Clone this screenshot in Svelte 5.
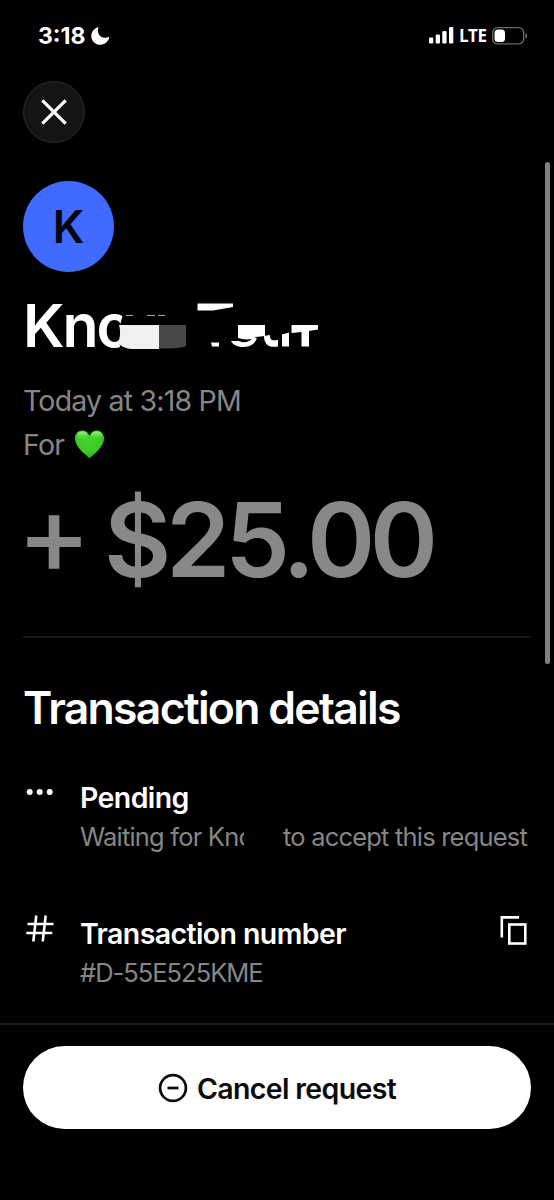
<script lang="ts">
	interface Transaction {
		initial: string;
		name: string;
		date: string;
		amount: string;
		number: string;
	}

	const transaction: Transaction = {
		initial: 'K',
		name: 'Kno',
		date: 'Today at 3:18 PM',
		amount: '$25.00',
		number: '#D-55E525KME'
	};
</script>

<div class="screen">
	<header class="status-bar">
		<div class="status-left">
			<span class="time">3:18</span>
			<svg class="moon" width="19" height="18" viewBox="0 0 19 18">
				<path d="M7.500 0C5.500 5.500 8.500 10.800 14 10.800c1.600 0 3-.3 4.400-1C17.500 14.500 14 17.700 9.500 17.700 4.300 17.700.3 13.900.3 8.900.3 4.800 3.500 1.200 7.500 0z" fill="#fff" />
			</svg>
		</div>
		<div class="status-right">
			<svg width="25" height="17" viewBox="0 0 25 17" fill="#fff">
				<rect x="0" y="10.500" width="4.300" height="6" rx="1.200" />
				<rect x="6.700" y="7.500" width="4.300" height="9" rx="1.200" />
				<rect x="13.300" y="4" width="4.300" height="12.500" rx="1.200" />
				<rect x="20" y="0" width="4.300" height="16.500" rx="1.200" />
			</svg>
			<span class="network">LTE</span>
			<svg class="battery" width="36" height="18" viewBox="0 0 36 18">
				<rect x=".7" y=".7" width="31" height="16.200" rx="5" fill="none" stroke="#6b6b6b" stroke-width="1.300" />
				<rect x="2.500" y="2.600" width="10.500" height="12.400" rx="3.500" fill="#fff" />
				<path d="M33.500 6v5.600c2.300-.9 2.300-4.700 0-5.600z" fill="#777" />
			</svg>
		</div>
	</header>

	<main class="content">
		<button class="close-button" aria-label="Close">
			<svg width="26" height="26" viewBox="0 0 26 26" stroke="#fff" stroke-width="3.200">
				<path d="M1.300 1.300l23.400 23.400M24.700 1.300L1.300 24.700" />
			</svg>
		</button>

		<div class="avatar">{transaction.initial}</div>

		<h1 class="name">
			<span>{transaction.name}</span>
			<!-- hidden remainder of the name -->
			<svg class="redaction" width="214" height="60" viewBox="106 295 214 60" aria-hidden="true">
				<path d="M123 295h40v60h-43v-6l-1-20 4-15z" fill="#000" />
				<path d="M126 315.400h7M147 315.400h8M158 315.400h7" stroke="#aaa" stroke-width="1" />
				<path d="M119 325h40v24h-25c-7 0-12-2-16-6 2-5 3-11 1-18z" fill="#f1f1f1" />
				<path d="M159 325h27v21c-4 2-13 2.500-27 2.500z" fill="#484848" />
				<path d="M197.500 303.500H233v3.500l-20 3.500h-15.500z" fill="#fff" />
				<path d="M211 342.500h8v4h-7z" fill="#fff" />
				<path d="M238 325h27v11l-9 1c-3 3-12 3-18 1zM231 341h8c4 2 9 2 14-3h4c-2 6-7 9-13 9-6 0-11-2-13-6z" fill="#fff" />
				<path d="M264 336l6-1c0 5 2 6 8 5v6.500c-9 1.500-14-2-14-10.500zM282 334.500l7-2v14h-7zM291.500 325h26.500v4.500l-9 1.500v15.500h-7.500V332l-10 1z" fill="#fff" />
			</svg>
		</h1>

		<div class="meta">
			<p class="date">{transaction.date}</p>
			<p class="note">
				<span>For</span>
				<svg width="31" height="31" viewBox="0 0 32 31">
					<defs>
						<radialGradient id="heart" cx=".45" cy=".3" r=".75">
							<stop offset="0" stop-color="#48d52f" />
							<stop offset=".65" stop-color="#3ac824" />
							<stop offset="1" stop-color="#22a514" />
						</radialGradient>
						<linearGradient id="shine" x1="0" y1="0" x2="0" y2="1">
							<stop offset="0" stop-color="#b4f99c" stop-opacity=".85" />
							<stop offset="1" stop-color="#6be650" stop-opacity="0" />
						</linearGradient>
					</defs>
					<path d="M16 30C12 25.500 1 18.500 1 9.300 1 4.500 4.200 1 8.500 1c3.500 0 6 2 7.500 5.200C17.500 3 20 1 23.500 1 27.800 1 31 4.500 31 9.300 31 18.500 20 25.500 16 30z" fill="url(#heart)" />
					<ellipse cx="8.500" cy="6" rx="5.500" ry="4" fill="url(#shine)" />
					<ellipse cx="23.500" cy="6" rx="5.500" ry="4" fill="url(#shine)" />
				</svg>
			</p>
		</div>

		<div class="amount">
			<span class="sign">+</span>
			<span class="value">{transaction.amount}</span>
		</div>

		<h2 class="section-title">Transaction details</h2>

		<div class="detail">
			<svg class="detail-icon" width="34" height="40" viewBox="0 0 34 40" fill="#fff">
				<circle cx="6.700" cy="14" r="3" />
				<circle cx="16.700" cy="14" r="3" />
				<circle cx="26.700" cy="14" r="3" />
			</svg>
			<div class="detail-body">
				<h3 class="detail-title">Pending</h3>
				<p class="detail-text waiting"><span class="who">Waiting for Kno</span><span>to accept this request</span></p>
			</div>
		</div>

		<div class="detail">
			<svg class="detail-icon" width="34" height="40" viewBox="0 0 34 40" fill="none" stroke="#fff" stroke-width="2.600">
				<path d="M13.300 1.500l-3 26M22.700 1.500l-3 26M4.500 10h26M3.300 19h26" />
			</svg>
			<div class="detail-body">
				<h3 class="detail-title">Transaction number</h3>
				<p class="detail-text code">{transaction.number}</p>
			</div>
			<button class="copy-button" aria-label="Copy transaction number">
				<svg width="27" height="29" viewBox="0 0 27 29" fill="none" stroke="#fff" stroke-width="2.600">
					<path d="M1.800 21.500V1.400H19" />
					<rect x="9.300" y="8.500" width="16" height="19" />
				</svg>
			</button>
		</div>
	</main>

	<footer class="footer">
		<button class="cancel-button">
			<svg width="30" height="30" viewBox="0 0 30 30" fill="none" stroke="#0b0b0b" stroke-width="2.700">
				<circle cx="15" cy="15" r="12.900" />
				<path d="M9.500 15h11" />
			</svg>
			<span>Cancel request</span>
		</button>
	</footer>

	<div class="scrollbar"></div>
</div>

<style>
	:global(body) {
		background: #000;
	}

	.screen {
		position: relative;
		box-sizing: border-box;
		width: 554px;
		height: 1200px;
		overflow: hidden;
		display: flex;
		flex-direction: column;
		background: #000;
		color: #fff;
		font-family: Inter, "Liberation Sans", sans-serif;
	}

	h1,
	h2,
	h3,
	p {
		margin: 0;
		font-weight: 500;
		white-space: nowrap;
	}

	button {
		border: none;
		padding: 0;
		background: none;
		font-family: inherit;
		cursor: pointer;
	}

	svg {
		display: block;
		flex: none;
	}

	.status-bar {
		display: flex;
		flex: none;
		justify-content: space-between;
		align-items: center;
		height: 71px;
		padding: 0 26px 0 38px;
	}

	.status-left,
	.status-right {
		display: flex;
		align-items: center;
	}

	.time {
		width: 53px;
		font-size: 23px;
		font-weight: 700;
	}

	.network {
		width: 32px;
		margin-left: 5px;
		padding-right: 1px;
		font-family: "Open Sans", sans-serif;
		font-size: 17px;
		font-weight: 700;
		letter-spacing: -0.5px;
	}

	.content {
		display: flex;
		flex: none;
		flex-direction: column;
		height: 952px;
		padding: 10px 23px 0;
		box-sizing: border-box;
	}

	.content > * {
		flex: none;
	}

	.close-button {
		display: flex;
		align-items: center;
		justify-content: center;
		box-sizing: border-box;
		width: 62px;
		height: 62px;
		border: 1.5px solid #2b2b2b;
		border-radius: 50%;
		background: #141414;
	}

	.avatar {
		display: flex;
		align-items: center;
		justify-content: center;
		width: 91px;
		height: 91px;
		margin-top: 38px;
		border-radius: 50%;
		background: #416aff;
		color: #04060f;
		font-size: 45px;
		font-weight: 600;
	}

	.name {
		display: flex;
		align-items: center;
		height: 70px;
		margin-top: 18px;
		font-size: 59px;
		font-weight: 600;
		letter-spacing: -2px;
	}

	.name span {
		width: 83px;
	}

	.redaction {
		z-index: 1;
	}

	.meta {
		margin-top: 19px;
		color: #868686;
		font-size: 28.5px;
		letter-spacing: -0.8px;
		line-height: 43.5px;
	}

	.meta p {
		font-weight: 400;
	}

	.note {
		display: flex;
		align-items: center;
		gap: 10px;
	}

	.amount {
		display: flex;
		height: 170px;
		border-bottom: 2px solid #191919;
		color: #888;
		font-size: 103.5px;
		font-weight: 600;
		letter-spacing: -5.4px;
		line-height: 147px;
	}

	.sign {
		width: 87px;
		margin-left: -6px;
		font-size: 111px;
		font-weight: 500;
		line-height: 136px;
	}

	.section-title {
		margin: 40px 0;
		font-size: 44.5px;
		font-weight: 600;
		letter-spacing: -1.7px;
		line-height: 60px;
	}

	.detail {
		display: flex;
		height: 78px;
		margin-bottom: 57.5px;
	}

	.detail-icon {
		margin-right: 23px;
	}

	.detail-body {
		flex: 1;
	}

	.detail-title {
		font-size: 28.5px;
		font-weight: 600;
		letter-spacing: -0.6px;
		line-height: 40px;
	}

	.detail-text {
		color: #868686;
		font-size: 25.5px;
		font-weight: 400;
		letter-spacing: -0.8px;
		line-height: 38px;
	}

	.code {
		letter-spacing: -1px;
	}

	.waiting {
		display: flex;
	}

	.who {
		width: 164px;
		margin-right: 39px;
		overflow: hidden;
	}

	.copy-button {
		align-self: flex-start;
		margin: 2px 4px 0 0;
	}

	.footer {
		border-top: 2px solid #1c1c1c;
		padding: 21px 23px 0;
	}

	.cancel-button {
		display: flex;
		align-items: center;
		justify-content: center;
		gap: 9px;
		width: 508px;
		height: 83px;
		border-radius: 42px;
		background: #fff;
		color: #0b0b0b;
		font-size: 28.5px;
		font-weight: 600;
		letter-spacing: -0.65px;
	}

	.cancel-button span {
		padding-top: 2px;
	}

	.scrollbar {
		position: absolute;
		top: 162px;
		right: 4px;
		width: 5px;
		height: 502px;
		border-radius: 3px;
		background: #808080;
	}
</style>
